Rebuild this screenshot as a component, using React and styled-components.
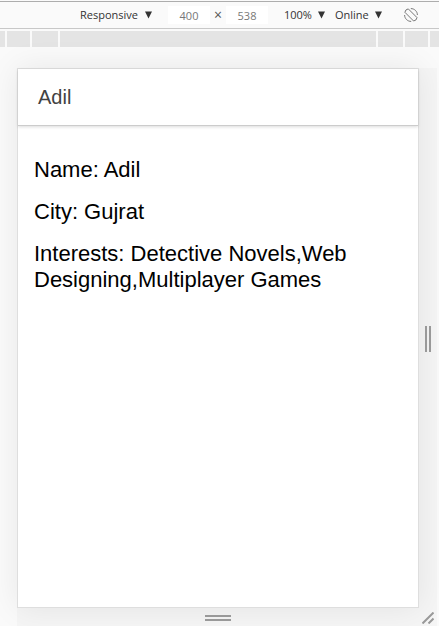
import React from "react";
import styled, { createGlobalStyle } from "styled-components";

const GlobalStyle = createGlobalStyle`
  *, *::before, *::after { box-sizing: border-box; }
  body { margin: 0; background: #fafafa; }
`;

const Page = styled.div`
  display: flex;
  flex-direction: column;
  min-height: 100vh;
  overflow: hidden;
  background: #fafafa;
  font-family: "Open Sans", "Noto Sans", sans-serif;
`;

const Toolbar = styled.header`
  display: flex;
  align-items: center;
  justify-content: flex-end;
  height: 28px;
  margin-top: 1px;
  padding-right: 21px;
  border-top: 1px solid #adadad;
  border-bottom: 1px solid #c8c8c8;
  color: #555;
  font-size: 12px;
`;

const Picker = styled.label`
  display: grid;
  align-items: center;
  width: ${(p) => p.$width}px;
  margin-right: ${(p) => p.$gap}px;

  > * { grid-area: 1 / 1; }
  > svg { justify-self: end; pointer-events: none; }
`;

const Select = styled.select`
  appearance: none;
  width: 100%;
  padding: 0;
  border: 0;
  background: transparent;
  color: #333;
  font: inherit;
  font-size: 11px;
  line-height: 18px;
`;

const SizeFields = styled.div`
  display: flex;
  align-items: center;
  margin-right: 16px;
`;

const SizeInput = styled.input`
  width: 42px;
  height: 18px;
  padding: 0;
  border: 0;
  background: #fff;
  color: #777;
  font: inherit;
  font-size: 11px;
  text-align: center;
`;

const Times = styled.span`
  width: 16px;
  font-size: 14px;
  line-height: 18px;
  text-align: center;
`;

const IconButton = styled.button`
  display: flex;
  padding: 0;
  border: 0;
  background: none;
  color: #777;
`;

const Ruler = styled.div`
  display: flex;
  gap: 2px;
  height: 16px;
  margin-top: 2px;
`;

const Band = styled.div`
  flex: ${(p) => (p.$width ? `0 0 ${p.$width}px` : "1")};
  background: #e4e4e4;
`;

const Stage = styled.main`
  flex: 1;
  display: grid;
  grid-template-columns: 1fr 18px;
  grid-template-rows: 1fr 18px;
  padding: 21px 2px 0 17px;
`;

const Screen = styled.section`
  border: 1px solid #dedede;
  background: #fff;
  box-shadow: 0 0 30px rgba(0, 0, 0, 0.08);
  font-family: "Liberation Sans", Arial, sans-serif;
`;

const AppBar = styled.header`
  display: flex;
  align-items: center;
  height: 57px;
  padding: 0 20px;
  border-bottom: 1px solid #ccc;
  box-shadow: 0 1px 3px rgba(0, 0, 0, 0.14);
`;

const Title = styled.h1`
  margin: 0;
  color: #424242;
  font-size: 20px;
  font-weight: 400;
`;

const Details = styled.div`
  display: grid;
  gap: 16px;
  padding: 31px 16px;
`;

const Detail = styled.p`
  margin: 0;
  color: #000;
  font-size: 22px;
  line-height: 26px;
`;

const Handle = styled.button`
  z-index: 1;
  display: flex;
  align-items: center;
  justify-content: center;
  padding: 2px 0 0;
  border: 0;
  background: rgba(0, 0, 0, 0.02);
  color: #999;
`;

function Arrow() {
  return (
    <svg width="7" height="8" viewBox="0 0 7 8" aria-hidden="true">
      <path d="M0 .5h7L3.5 7.5z" fill="#333" />
    </svg>
  );
}

function Dropdown({ name, value, width, gap }) {
  return (
    <Picker $width={width} $gap={gap}>
      <Select aria-label={name} defaultValue={value}>
        <option>{value}</option>
      </Select>
      <Arrow />
    </Picker>
  );
}

function RotateIcon() {
  return (
    <svg width="14" height="14" viewBox="0 0 14 14" fill="none" stroke="currentColor" aria-hidden="true">
      <path d="M4.3.9 13 9.6Q12.6 12.6 9.6 13L.9 4.3Q1.3 1.3 4.3.9z" strokeLinejoin="round" />
      <path d="M6.8.6C10.4.5 13.4 3.4 13.4 7M7.2 13.4C3.6 13.5.6 10.6.6 7" />
    </svg>
  );
}

const details = [
  ["Name", "Adil"],
  ["City", "Gujrat"],
  ["Interests", "Detective Novels,Web Designing,Multiplayer Games"],
];

export default function App() {
  return (
    <Page>
      <GlobalStyle />
      <Toolbar>
        <Dropdown name="Device" value="Responsive" width={72} gap={16} />
        <SizeFields>
          <SizeInput aria-label="Width" defaultValue="400" />
          <Times>×</Times>
          <SizeInput aria-label="Height" defaultValue="538" />
        </SizeFields>
        <Dropdown name="Zoom" value="100%" width={41} gap={10} />
        <Dropdown name="Network" value="Online" width={47} gap={22} />
        <IconButton aria-label="Rotate">
          <RotateIcon />
        </IconButton>
      </Toolbar>
      <Ruler>
        <Band $width={5} />
        <Band $width={23} />
        <Band $width={26} />
        <Band />
        <Band $width={25} />
        <Band $width={23} />
        <Band $width={9} />
      </Ruler>
      <Stage>
        <Screen>
          <AppBar>
            <Title>Adil</Title>
          </AppBar>
          <Details>
            {details.map(([label, value]) => (
              <Detail key={label}>{`${label}: ${value}`}</Detail>
            ))}
          </Details>
        </Screen>
        <Handle aria-label="Resize width">
          <svg width="6" height="26" viewBox="0 0 6 26" fill="currentColor">
            <path d="M0 0h2v26H0zM4 0h2v26H4z" />
          </svg>
        </Handle>
        <Handle aria-label="Resize height">
          <svg width="26" height="6" viewBox="0 0 26 6" fill="currentColor">
            <path d="M0 0h26v2H0zM0 4h26v2H0z" />
          </svg>
        </Handle>
        <Handle aria-label="Resize both">
          <svg width="12" height="12" viewBox="0 0 12 12" fill="none" stroke="currentColor" strokeWidth="2">
            <path d="M.5 11.5l11-11M6.5 11.5l5-5" />
          </svg>
        </Handle>
      </Stage>
    </Page>
  );
}
